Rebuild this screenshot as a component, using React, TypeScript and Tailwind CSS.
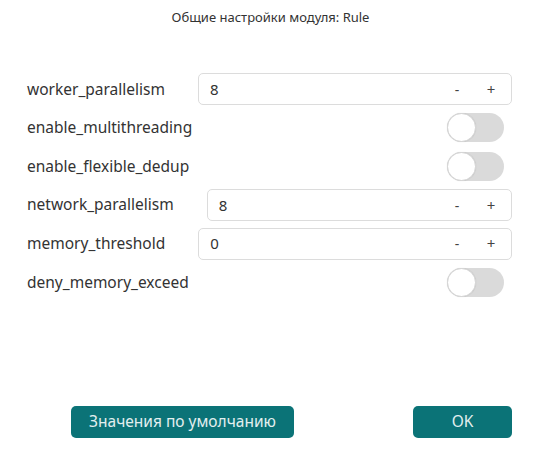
import React, { useState } from "react";

type Field =
  | { key: string; kind: "number"; value: number }
  | { key: string; kind: "toggle"; value: boolean };

const initialFields: Field[] = [
  { key: "worker_parallelism", kind: "number", value: 8 },
  { key: "enable_multithreading", kind: "toggle", value: false },
  { key: "enable_flexible_dedup", kind: "toggle", value: false },
  { key: "network_parallelism", kind: "number", value: 8 },
  { key: "memory_threshold", kind: "number", value: 0 },
  { key: "deny_memory_exceed", kind: "toggle", value: false },
];

function NumberInput({ value, onChange }: { value: number; onChange: (v: number) => void }) {
  return (
    <div className="flex-1 h-[32px] flex items-center rounded-[5px] border border-[#dcdcdc] bg-white pl-[11px] pr-[15px]">
      <span className="flex-1 text-[15px] text-[#333]">{value}</span>
      <button className="w-[10px] text-[14px] text-[#444] mr-[24px]" onClick={() => onChange(value - 1)}>
        -
      </button>
      <button className="w-[10px] text-[15px] text-[#444]" onClick={() => onChange(value + 1)}>
        +
      </button>
    </div>
  );
}

function Toggle({ on, onToggle }: { on: boolean; onToggle: () => void }) {
  return (
    <div className="flex-1 flex justify-end pr-[8px]">
      <button
        onClick={onToggle}
        className={`w-[57px] h-[29px] rounded-full flex items-center ${on ? "bg-[#0b7377] justify-end" : "bg-[#dadada] justify-start"}`}
      >
        <span className="w-[29px] h-[29px] rounded-full bg-white border border-[#d6d6d6] shadow-[0_0_1px_rgba(0,0,0,0.15)]" />
      </button>
    </div>
  );
}

export default function App() {
  const [fields, setFields] = useState<Field[]>(initialFields);

  const update = (i: number, v: number | boolean) =>
    setFields((prev) => prev.map((f, idx) => (idx === i ? ({ ...f, value: v } as Field) : f)));

  return (
    <div className="w-[541px] h-[452px] bg-white flex flex-col font-['Noto_Sans',sans-serif] text-[#333]">
      {/* title */}
      <div className="h-[35px] flex items-center justify-center text-[13px] text-[#333]">
        Общие настройки модуля: Rule
      </div>

      {/* settings */}
      <div className="mt-[35px] pl-[27px] pr-[29px] flex flex-col">
        {fields.map((f, i) => (
          <div key={f.key} className="h-[38.6px] flex items-center">
            <span className="text-[15.5px] text-[#333] mr-[33px]">{f.key}</span>
            {f.kind === "number" ? (
              <NumberInput value={f.value} onChange={(v) => update(i, v)} />
            ) : (
              <Toggle on={f.value} onToggle={() => update(i, !f.value)} />
            )}
          </div>
        ))}
      </div>

      {/* footer */}
      <div className="mt-auto mb-[14px] pl-[71px] pr-[29px] flex items-center justify-between">
        <button className="h-[32px] w-[223px] rounded-[5px] bg-[#0b7377] text-[#e3efef] text-[15.5px]">
          Значения по умолчанию
        </button>
        <button className="h-[32px] w-[99px] rounded-[5px] bg-[#0b7377] text-[#e3efef] text-[15.5px]">
          OK
        </button>
      </div>
    </div>
  );
}
